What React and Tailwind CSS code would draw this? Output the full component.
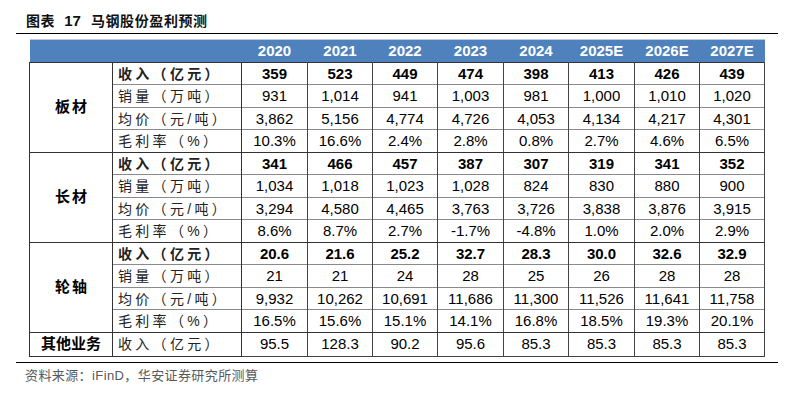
import React from "react";

const years = ["2020", "2021", "2022", "2023", "2024", "2025E", "2026E", "2027E"];
const colW = ["w-[66px]", "w-[65px]", "w-[65px]", "w-[66px]", "w-[65px]", "w-[66px]", "w-[65px]", "w-[65px]"];

const groups = [
  {
    name: "板材",
    rows: [
      ["收入（亿元）", ["359", "523", "449", "474", "398", "413", "426", "439"], true],
      ["销量（万吨）", ["931", "1,014", "941", "1,003", "981", "1,000", "1,010", "1,020"]],
      ["均价（元/吨）", ["3,862", "5,156", "4,774", "4,726", "4,053", "4,134", "4,217", "4,301"]],
      ["毛利率（%）", ["10.3%", "16.6%", "2.4%", "2.8%", "0.8%", "2.7%", "4.6%", "6.5%"]],
    ],
  },
  {
    name: "长材",
    rows: [
      ["收入（亿元）", ["341", "466", "457", "387", "307", "319", "341", "352"], true],
      ["销量（万吨）", ["1,034", "1,018", "1,023", "1,028", "824", "830", "880", "900"]],
      ["均价（元/吨）", ["3,294", "4,580", "4,465", "3,763", "3,726", "3,838", "3,876", "3,915"]],
      ["毛利率（%）", ["8.6%", "8.7%", "2.7%", "-1.7%", "-4.8%", "1.0%", "2.0%", "2.9%"]],
    ],
  },
  {
    name: "轮轴",
    rows: [
      ["收入（亿元）", ["20.6", "21.6", "25.2", "32.7", "28.3", "30.0", "32.6", "32.9"], true],
      ["销量（万吨）", ["21", "21", "24", "28", "25", "26", "28", "28"]],
      ["均价（元/吨）", ["9,932", "10,262", "10,691", "11,686", "11,300", "11,526", "11,641", "11,758"]],
      ["毛利率（%）", ["16.5%", "15.6%", "15.1%", "14.1%", "16.8%", "18.5%", "19.3%", "20.1%"]],
    ],
  },
];

export default function App() {
  return (
    <div className="w-[792px] h-[402px] bg-white text-black font-['Liberation_Sans','Noto_Sans_CJK_SC',sans-serif] overflow-hidden">
      <div className="h-[33px] pl-[26px] pt-[12px] text-[14px] leading-[18px] font-bold text-[#111] tracking-[0.6px] flex">
        <span>图表</span>
        <span className="ml-[9px] text-[15px] tracking-[0px]">17</span>
        <span className="ml-[10px]">马钢股份盈利预测</span>
      </div>
      <div className="ml-[16px] w-[762px] border-t border-black"></div>
      <div className="pl-[29px] pt-[5px]">
        <table className="table-fixed border-collapse w-[736px]">
          <colgroup>
            <col className="w-[83px]" />
            <col className="w-[129px]" />
            {years.map((y, i) => (
              <col key={y} className={colW[i]} />
            ))}
          </colgroup>
          <thead>
            <tr className="h-[23px] bg-[#4f81bd]">
              <th className="border-t border-[#bcc8d8]"></th>
              <th className="border-t border-[#bcc8d8]"></th>
              {years.map((y) => (
                <th key={y} className="border-t border-[#bcc8d8] p-0 text-center text-white font-bold text-[15px] leading-[22px]">
                  {y}
                </th>
              ))}
            </tr>
          </thead>
          <tbody>
            {groups.map((g) =>
              g.rows.map((r, ri) => (
                <tr key={g.name + ri} className={ri % 2 === 0 ? "h-[22px]" : "h-[23px]"}>
                  {ri === 0 && (
                    <td
                      rowSpan={4}
                      className="border border-[#333] p-0 text-center align-middle font-bold text-[15px] tracking-[2px] pl-[2px]"
                    >
                      {g.name}
                    </td>
                  )}
                  <td
                    className={`border-x border-[#333] p-0 pl-[5px] text-left text-[14px] leading-[20px] tracking-[3.3px] text-[#222] ${
                      ri === 0 ? "border-t border-t-[#333] font-bold" : "border-t border-t-[#8a8a8a]"
                    } ${ri === 3 ? "border-b border-b-[#333]" : ""}`}
                  >
                    {r[0]}
                  </td>
                  {r[1].map((v, vi) => (
                    <td
                      key={vi}
                      className={`border-x border-[#444] p-0 text-center text-[15px] leading-[20px] ${
                        ri === 0 ? "border-t border-t-[#333] font-bold" : "border-t border-t-[#8a8a8a]"
                      } ${ri === 3 ? "border-b border-b-[#333]" : ""}`}
                    >
                      {v}
                    </td>
                  ))}
                </tr>
              ))
            )}
            <tr className="h-[23px]">
              <td className="border border-[#333] p-0 text-center font-bold text-[15px] tracking-[0px]">其他业务</td>
              <td className="border border-[#333] p-0 pl-[5px] text-left text-[14px] leading-[20px] tracking-[3.3px] text-[#222]">
                收入（亿元）
              </td>
              {["95.5", "128.3", "90.2", "95.6", "85.3", "85.3", "85.3", "85.3"].map((v, i) => (
                <td key={i} className="border border-[#444] p-0 text-center text-[15px] leading-[20px]">
                  {v}
                </td>
              ))}
            </tr>
          </tbody>
        </table>
      </div>
      <div className="ml-[16px] mt-[5px] w-[762px] border-t border-black"></div>
      <div className="pl-[25px] pt-[5px] text-[13px] leading-[16px] text-[#595959] tracking-[0.4px]">
        资料来源：iFinD，华安证券研究所测算
      </div>
    </div>
  );
}
